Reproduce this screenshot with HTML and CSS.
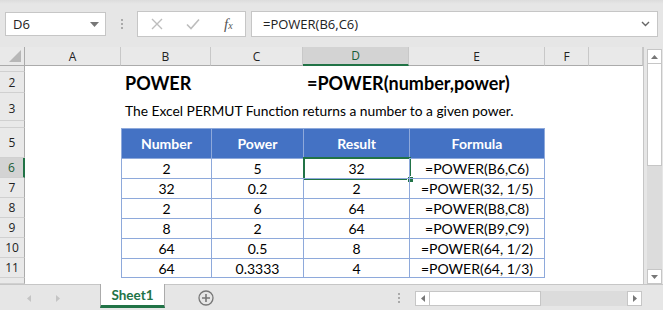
FILE: index.html
```html
<!DOCTYPE html>
<html lang="en">
<head>
    <meta charset="UTF-8">
    <title>POWER - Excel</title>
    <link rel="stylesheet" href="styles.css">
</head>
<body>
<div class="app">
    <div class="topbar">
        <div class="namebox">
            <span>D6</span>
            <svg class="caret" width="9" height="5" viewBox="0 0 9 5"><path d="M0 0h9L4.5 5z" fill="#777"/></svg>
        </div>
        <div class="grip"><i></i><i></i><i></i></div>
        <div class="fxbox">
            <svg width="12" height="12" viewBox="0 0 12 12"><path d="M1 1l10 10M11 1L1 11" stroke="#bdbdbd" stroke-width="1.4" fill="none"/></svg>
            <svg width="14" height="12" viewBox="0 0 14 12"><path d="M1 6.5l4 4L13 1.5" stroke="#bdbdbd" stroke-width="1.6" fill="none"/></svg>
            <span class="fx">f<sub>x</sub></span>
        </div>
        <div class="formula">
            <span>=POWER(B6,C6)</span>
            <svg width="9" height="6" viewBox="0 0 9 6"><path d="M1 1l3.5 3.5L8 1" stroke="#666" stroke-width="1.4" fill="none"/></svg>
        </div>
    </div>

    <div class="sheet">
        <div class="grid">
            <!-- column headers -->
            <div class="corner"></div>
            <div class="ch">A</div>
            <div class="ch">B</div>
            <div class="ch">C</div>
            <div class="ch on">D</div>
            <div class="ch">E</div>
            <div class="ch">F</div>
            <div class="ch"></div>

            <!-- row 1 -->
            <div class="rh"></div><div class="c span7"></div>

            <!-- row 2 -->
            <div class="rh">2</div>
            <div class="c"></div>
            <div class="c bottom"><b class="title">POWER</b></div>
            <div class="c"></div>
            <div class="c bottom"><b class="title">=POWER(number,power)</b></div>
            <div class="c"></div><div class="c"></div><div class="c"></div>

            <!-- row 3 -->
            <div class="rh bottom">3</div>
            <div class="c"></div>
            <div class="c bottom"><span class="desc">The Excel PERMUT Function returns a number to a given power.</span></div>
            <div class="c"></div><div class="c"></div><div class="c"></div><div class="c"></div><div class="c"></div>

            <!-- row 4 (squeezed) -->
            <div class="rh"></div><div class="c span7"></div>

            <!-- row 5 -->
            <div class="rh">5</div>
            <div class="c"></div>
            <div class="t th">Number</div>
            <div class="t th">Power</div>
            <div class="t th">Result</div>
            <div class="t th last">Formula</div>
            <div class="c"></div><div class="c"></div>

            <!-- row 6 -->
            <div class="rh on">6</div>
            <div class="c"></div>
            <div class="t">2</div>
            <div class="t">5</div>
            <div class="t sel">32<span class="handle"></span></div>
            <div class="t last">=POWER(B6,C6)</div>
            <div class="c"></div><div class="c"></div>

            <!-- row 7 -->
            <div class="rh">7</div>
            <div class="c"></div>
            <div class="t">32</div>
            <div class="t">0.2</div>
            <div class="t">2</div>
            <div class="t last">=POWER(32, 1/5)</div>
            <div class="c"></div><div class="c"></div>

            <!-- row 8 -->
            <div class="rh">8</div>
            <div class="c"></div>
            <div class="t">2</div>
            <div class="t">6</div>
            <div class="t">64</div>
            <div class="t last">=POWER(B8,C8)</div>
            <div class="c"></div><div class="c"></div>

            <!-- row 9 -->
            <div class="rh">9</div>
            <div class="c"></div>
            <div class="t">8</div>
            <div class="t">2</div>
            <div class="t">64</div>
            <div class="t last">=POWER(B9,C9)</div>
            <div class="c"></div><div class="c"></div>

            <!-- row 10 -->
            <div class="rh">10</div>
            <div class="c"></div>
            <div class="t">64</div>
            <div class="t">0.5</div>
            <div class="t">8</div>
            <div class="t last">=POWER(64, 1/2)</div>
            <div class="c"></div><div class="c"></div>

            <!-- row 11 -->
            <div class="rh">11</div>
            <div class="c"></div>
            <div class="t end">64</div>
            <div class="t end">0.3333</div>
            <div class="t end">4</div>
            <div class="t end last">=POWER(64, 1/3)</div>
            <div class="c"></div><div class="c"></div>

            <!-- row 12 (cut off) -->
            <div class="rh"></div><div class="c span7"></div>
        </div>

        <div class="vscroll">
            <div class="sbtn"><svg width="7" height="4" viewBox="0 0 7 4"><path d="M0 4h7L3.5 0z" fill="#777"/></svg></div>
            <div class="vthumb"></div>
            <div class="vtrack"></div>
            <div class="sbtn"><svg width="7" height="4" viewBox="0 0 7 4"><path d="M0 0h7L3.5 4z" fill="#777"/></svg></div>
        </div>
    </div>

    <div class="tabbar">
        <div class="nav">
            <svg width="4" height="7" viewBox="0 0 4 7"><path d="M4 0v7L0 3.5z" fill="#c4c4c4"/></svg>
            <svg width="4" height="7" viewBox="0 0 4 7"><path d="M0 0v7L4 3.5z" fill="#c4c4c4"/></svg>
        </div>
        <div class="tab">Sheet1</div>
        <div class="addsheet">
            <svg width="16" height="16" viewBox="0 0 16 16"><circle cx="8" cy="8" r="7" stroke="#777" stroke-width="1.3" fill="none"/><path d="M8 4v8M4 8h8" stroke="#777" stroke-width="1.6"/></svg>
        </div>
        <div class="grip vert"><i></i><i></i><i></i></div>
        <div class="hscroll">
            <div class="sbtn"><svg width="4" height="7" viewBox="0 0 4 7"><path d="M4 0v7L0 3.5z" fill="#777"/></svg></div>
            <div class="hthumb"></div>
            <div class="htrack"></div>
            <div class="sbtn"><svg width="4" height="7" viewBox="0 0 4 7"><path d="M0 0v7L4 3.5z" fill="#777"/></svg></div>
        </div>
    </div>
</div>
</body>
</html>
```

FILE: styles.css
```css
body {
    margin: 0;
    overflow: hidden;
    background: #e6e6e6;
    font-family: 'Lato', 'Open Sans', sans-serif;
    color: #000;
}
.app {
    width: 663px;
    height: 310px;
    display: flex;
    flex-direction: column;
}

/* formula bar */
.topbar {
    height: 47px;
    display: flex;
    align-items: flex-start;
    padding-top: 11px;
    box-sizing: border-box;
    background: linear-gradient(#dcdcdc, #e6e6e6 4px);
}
.namebox {
    margin-left: 5px;
    margin-top: 1px;
    width: 101px;
    height: 24px;
    box-sizing: border-box;
    background: #fff;
    border: 1px solid #c6c6c6;
    display: flex;
    align-items: center;
    justify-content: space-between;
    padding: 0 6px 0 7px;
    font-family: 'Open Sans', sans-serif;
    font-size: 13px;
    color: #222;
}
.grip {
    width: 31px;
    display: flex;
    flex-direction: column;
    align-items: center;
    gap: 2px;
    padding-top: 8px;
}
.grip i {
    width: 2px;
    height: 2px;
    background: #aaa;
}
.fxbox {
    width: 109px;
    height: 26px;
    box-sizing: border-box;
    background: #fff;
    border: 1px solid #c6c6c6;
    display: flex;
    align-items: center;
    padding-left: 13px;
    gap: 23px;
}
.fx {
    font-family: 'Liberation Serif', serif;
    font-style: italic;
    font-size: 15px;
    color: #555;
    margin-left: 1px;
}
.fx sub {
    font-size: 10px;
    vertical-align: 0;
}
.formula {
    margin-left: 5px;
    width: 407px;
    height: 26px;
    box-sizing: border-box;
    background: #fff;
    border: 1px solid #c6c6c6;
    display: flex;
    align-items: center;
    justify-content: space-between;
    padding: 0 7px 0 11px;
    font-family: 'Open Sans', sans-serif;
    font-size: 13px;
    color: #222;
}

/* sheet */
.sheet {
    height: 237px;
    display: flex;
}
.grid {
    width: 643px;
    display: grid;
    grid-template-columns: 25px 96px 90px 92px 106px 136px 44px 54px;
    grid-template-rows: 19px 6px 21px 28px 7px 30px repeat(6, 20px) 6px;
    background: #fff;
    border-right: 1px solid #c6c6c6;
    box-sizing: content-box;
    overflow: hidden;
}
.corner {
    background: #e9e9e9;
    border-right: 1px solid #ababab;
    border-bottom: 1px solid #ababab;
    position: relative;
}
.corner::after {
    content: "";
    position: absolute;
    right: 3px;
    bottom: 3px;
    border-left: 12px solid transparent;
    border-bottom: 12px solid #b7b7b7;
}
.ch {
    background: #e9e9e9;
    border-right: 1px solid #c8c8c8;
    border-bottom: 1px solid #ababab;
    display: flex;
    align-items: center;
    justify-content: center;
    font-family: 'Open Sans', sans-serif;
    font-size: 12px;
    color: #222;
}
.ch.on {
    background: #d3d3d3;
    border-bottom: 2px solid #217346;
    color: #185c37;
}
.rh {
    background: #e9e9e9;
    border-right: 1px solid #ababab;
    border-bottom: 1px solid #d0d0d0;
    display: flex;
    align-items: center;
    justify-content: center;
    font-family: 'Open Sans', sans-serif;
    font-size: 12px;
    color: #222;
    box-sizing: border-box;
    overflow: hidden;
}
.rh.bottom {
    align-items: flex-end;
    padding-bottom: 3px;
    line-height: 16px;
}
.rh.on {
    background: #d3d3d3;
    border-right: 2px solid #217346;
    color: #185c37;
}
.c {
    overflow: visible;
    white-space: nowrap;
    display: flex;
    align-items: center;
    padding-left: 4px;
}
.c.bottom {
    align-items: flex-end;
}
.span7 {
    grid-column: span 7;
}
.title {
    font-size: 18px;
    line-height: 20px;
}
.desc {
    font-size: 13.8px;
    line-height: 18px;
    padding-bottom: 1px;
}

/* data table */
.t {
    border-left: 1px solid #8ea9db;
    border-top: 1px solid #8ea9db;
    display: flex;
    align-items: center;
    justify-content: center;
    font-size: 14px;
    white-space: nowrap;
    position: relative;
}
.t.last {
    border-right: 1px solid #8ea9db;
}
.t.end {
    border-bottom: 1px solid #8ea9db;
}
.th {
    background: #4472c4;
    color: #fff;
    font-weight: bold;
    border-left-color: #8ea9db;
}
.sel::before {
    content: "";
    position: absolute;
    left: -1px;
    top: -2px;
    right: -2px;
    bottom: -2px;
    border: 2px solid #217346;
}
.handle {
    position: absolute;
    right: -5px;
    bottom: -5px;
    width: 5px;
    height: 5px;
    background: #217346;
    border: 1px solid #fff;
}

/* scrollbars */
.vscroll {
    margin-left: 3px;
    margin-top: 2px;
    width: 15px;
    display: flex;
    flex-direction: column;
}
.sbtn {
    width: 15px;
    height: 15px;
    box-sizing: border-box;
    background: #fff;
    border: 1px solid #c6c6c6;
    display: flex;
    align-items: center;
    justify-content: center;
}
.vthumb {
    height: 102px;
    background: #fff;
    border: 1px solid #c6c6c6;
    border-top: none;
    box-sizing: border-box;
}
.vtrack {
    flex: 1;
    background: #dcdcdc;
}

.tabbar {
    flex: 1;
    display: flex;
    align-items: flex-start;
    border-top: 1px solid #c6c6c6;
    background: #e6e6e6;
}
.nav {
    width: 100px;
    display: flex;
    gap: 25px;
    padding: 10px 0 0 27px;
    box-sizing: border-box;
}
.tab {
    width: 65px;
    height: 24px;
    box-sizing: border-box;
    margin-top: -1px;
    background: #fff;
    border-left: 1px solid #ababab;
    border-right: 1px solid #ababab;
    border-bottom: 3px solid #217346;
    display: flex;
    align-items: center;
    justify-content: center;
    font-weight: bold;
    font-size: 13.5px;
    color: #217346;
}
.addsheet {
    margin-left: 33px;
    padding-top: 5px;
}
.grip.vert {
    margin-left: 182px;
    width: 6px;
    padding-top: 8px;
}
.hscroll {
    margin-left: 13px;
    margin-top: 6px;
    width: 227px;
    height: 15px;
    display: flex;
}
.hthumb {
    width: 111px;
    background: #fff;
    border: 1px solid #c6c6c6;
    border-left: none;
    box-sizing: border-box;
}
.htrack {
    flex: 1;
    background: #dcdcdc;
}
```
